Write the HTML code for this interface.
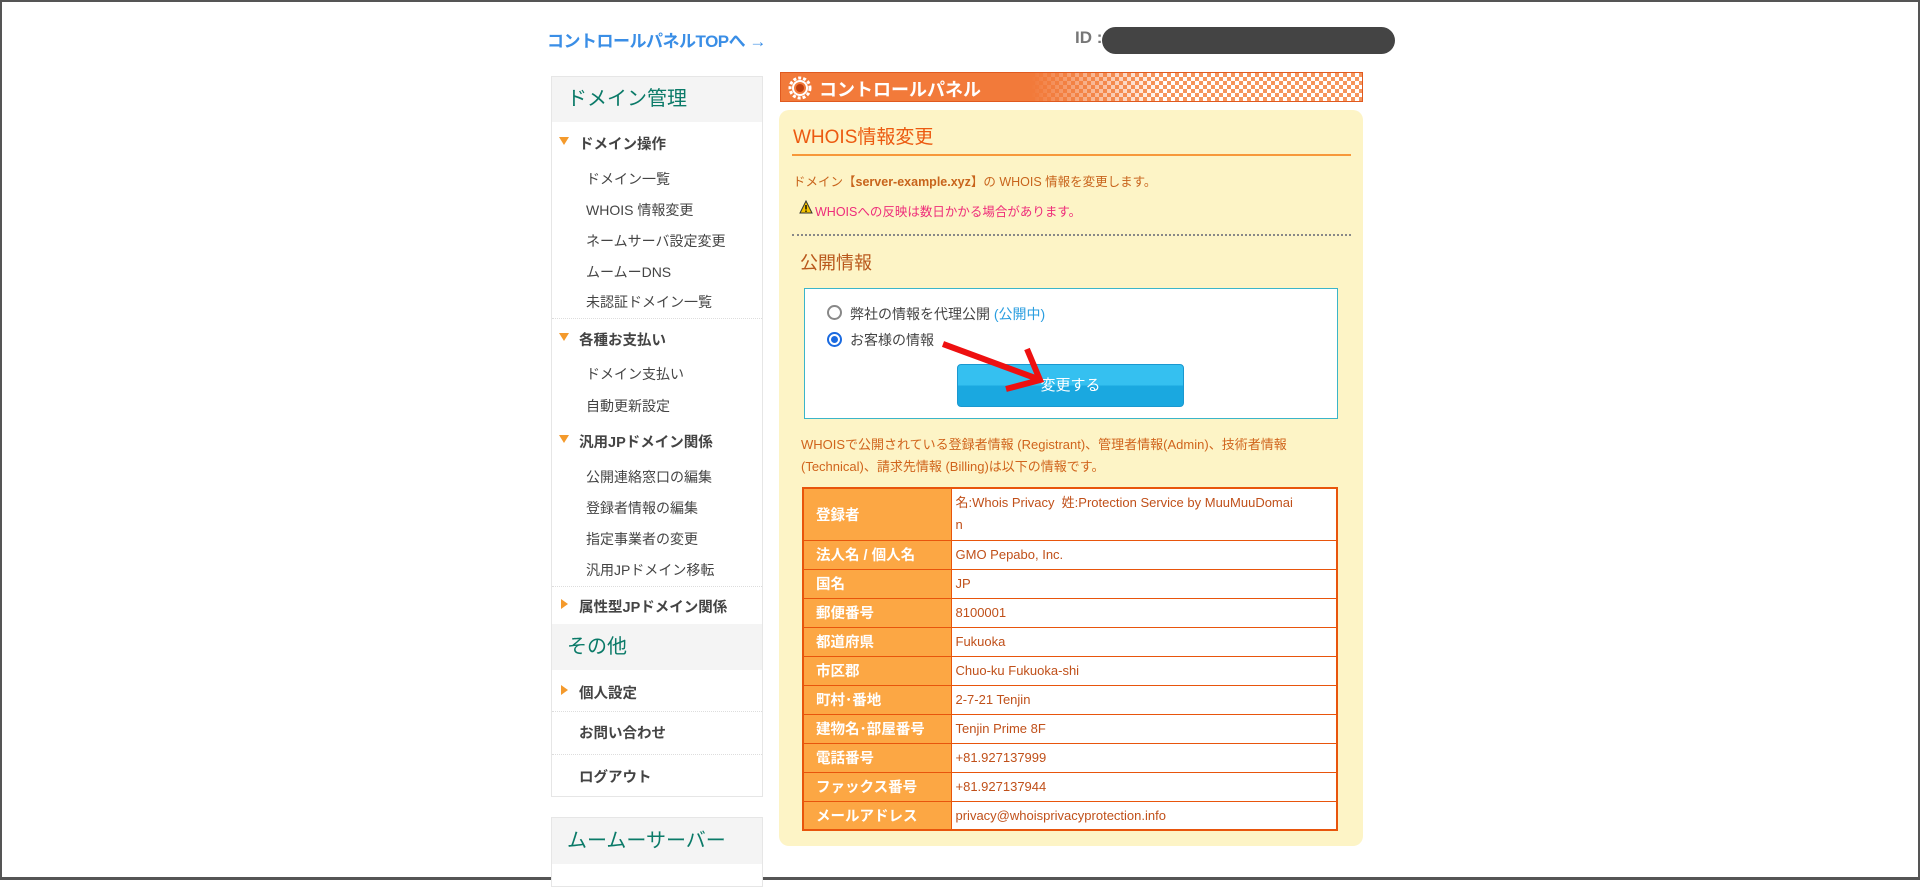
<!DOCTYPE html>
<html><head><meta charset="utf-8">
<style>
*{margin:0;padding:0;box-sizing:border-box}
body{width:1920px;height:880px;background:#fff;font-family:"Liberation Sans","Noto Sans CJK JP",sans-serif;position:relative;overflow:hidden}
.frame{position:absolute;left:0;top:0;width:1920px;height:880px;border:2px solid #555;border-bottom-width:3px}
.abs{position:absolute;white-space:nowrap}
.top{left:547px;top:27px;font-size:17px;font-weight:bold;color:#3a8ee6;letter-spacing:-0.5px}
.id{left:1075px;top:28px;font-size:17px;font-weight:bold;color:#777}
.pill{left:1102px;top:27px;width:293px;height:27px;background:#444;border-radius:14px}
.side{position:absolute;left:551px;top:76px;width:212px;height:721px;border:1px solid #e6e6e6;background:#fff}
.side2{position:absolute;left:551px;top:817px;width:212px;height:70px;border:1px solid #e6e6e6;background:#fff}
.sh{position:absolute;left:0;width:210px;background:#f4f4f4;color:#0a7a68;font-size:20px;padding-left:15px}
.it{position:absolute;left:34px;font-size:14px;color:#444}
.b{position:absolute;left:27px;font-size:14.5px;font-weight:bold;color:#444}
.tri{position:absolute;left:7px;width:0;height:0;border-left:5px solid transparent;border-right:5px solid transparent;border-top:8px solid #f49a2c}
.trr{position:absolute;left:9px;width:0;height:0;border-top:5px solid transparent;border-bottom:5px solid transparent;border-left:7px solid #f49a2c}
.dv{position:absolute;left:0;width:210px;border-top:1px dotted #ddd}
.banner{left:780px;top:72px;width:583px;height:30px;background:#f27a3a;border:1px solid #e05a20;overflow:hidden}
.chk{position:absolute;left:250px;top:0;width:333px;height:30px;background:repeating-conic-gradient(#fff 0 25%,#f6955c 0 50%) 0 0/8px 8px;-webkit-mask-image:linear-gradient(90deg,transparent,#000 40%);mask-image:linear-gradient(90deg,transparent,#000 40%)}
.panel{left:779px;top:110px;width:584px;height:736px;background:#fdf4c6;border-radius:10px}
.t1{left:793px;top:122px;font-size:19px;color:#ec5a10}
.hl{left:792px;top:154px;width:559px;height:2px;background:#f7983a}
.t2{left:793px;top:171px;font-size:12.5px;color:#c8641c}
.t3{left:801px;top:201px;font-size:12.5px;color:#ee2c7a}
.dot{left:792px;top:234px;width:559px;border-top:2px dotted #888}
.t4{left:800px;top:249px;font-size:18px;color:#b9581c}
.box{left:804px;top:288px;width:534px;height:131px;background:#fff;border:1px solid #3bb5c9}
.r{position:absolute;width:15px;height:15px;border-radius:50%;border:2px solid #888;background:#fff}
.rl{font-size:14px;color:#444}
.btn{left:957px;top:364px;width:227px;height:43px;border-radius:4px;background:linear-gradient(#35c0f0 0,#35c0f0 48%,#1aa8e0 52%,#1aa8e0 100%);border:1px solid #1a98d0;color:#fff;font-size:15px;text-align:center;line-height:42px}
.d1{left:801px;top:434px;font-size:13px;color:#d0641c;line-height:22px}
table{position:absolute;left:802px;top:487px;width:536px;border-collapse:collapse;border:2px solid #e8550c}
td{border:1px solid #e8550c;height:29px;font-size:13px;padding-left:4px;color:#c0501a;background:#fff}
td.l{background:#fca744;color:#fff;font-weight:bold;font-size:14.5px;width:148px;padding-left:12px}
</style></head><body>
<div class="frame"></div>
<div class="abs top">コントロールパネルTOPへ →</div>
<div class="abs id">ID :</div>
<div class="abs pill"></div>

<div class="side">
 <div class="sh" style="top:0;height:45px;line-height:45px">ドメイン管理</div>
 <div class="tri" style="top:60px"></div><div class="b" style="top:56px">ドメイン操作</div>
 <div class="it" style="top:92px">ドメイン一覧</div>
 <div class="it" style="top:123px">WHOIS 情報変更</div>
 <div class="it" style="top:154px">ネームサーバ設定変更</div>
 <div class="it" style="top:185px">ムームーDNS</div>
 <div class="it" style="top:215px">未認証ドメイン一覧</div>
 <div class="dv" style="top:241px"></div>
 <div class="tri" style="top:256px"></div><div class="b" style="top:252px">各種お支払い</div>
 <div class="it" style="top:287px">ドメイン支払い</div>
 <div class="it" style="top:319px">自動更新設定</div>
 <div class="tri" style="top:358px"></div><div class="b" style="top:354px">汎用JPドメイン関係</div>
 <div class="it" style="top:390px">公開連絡窓口の編集</div>
 <div class="it" style="top:421px">登録者情報の編集</div>
 <div class="it" style="top:452px">指定事業者の変更</div>
 <div class="it" style="top:483px">汎用JPドメイン移転</div>
 <div class="dv" style="top:509px"></div>
 <div class="trr" style="top:522px"></div><div class="b" style="top:519px">属性型JPドメイン関係</div>
 <div class="sh" style="top:547px;height:46px;line-height:46px">その他</div>
 <div class="trr" style="top:608px"></div><div class="b" style="top:605px">個人設定</div>
 <div class="dv" style="top:634px"></div>
 <div class="b" style="top:645px">お問い合わせ</div>
 <div class="dv" style="top:677px"></div>
 <div class="b" style="top:689px">ログアウト</div>
</div>
<div class="side2"><div class="sh" style="top:0;height:46px;line-height:46px">ムームーサーバー</div></div>

<div class="abs banner"><div class="chk"></div>
 <svg style="position:absolute;left:6px;top:2px" width="26" height="26" viewBox="0 0 26 26"><circle cx="13" cy="13" r="10" fill="none" stroke="#fff" stroke-width="3" stroke-dasharray="3 2"/><circle cx="13" cy="13" r="7" fill="#f27a3a" stroke="#fff" stroke-width="2"/><circle cx="13" cy="13" r="4" fill="#c04010"/></svg>
 <div style="position:absolute;left:38px;top:3px;color:#fff;font-weight:bold;font-size:18px;letter-spacing:0px">コントロールパネル</div>
</div>
<div class="abs panel"></div>
<div class="abs t1">WHOIS情報変更</div>
<div class="abs hl"></div>
<div class="abs t2">ドメイン【<b>server-example.xyz</b>】の WHOIS 情報を変更します。</div>
<svg class="abs" style="left:799px;top:200px" width="14" height="14" viewBox="0 0 14 14"><path d="M7 1L13 13H1Z" fill="#f5c400" stroke="#333" stroke-width="1"/><rect x="6.3" y="5" width="1.4" height="4.5" fill="#000"/><rect x="6.3" y="10.5" width="1.4" height="1.4" fill="#000"/></svg>
<div class="abs t3" style="left:815px">WHOISへの反映は数日かかる場合があります。</div>
<div class="abs dot"></div>
<div class="abs t4">公開情報</div>
<div class="abs box">
 <div class="r" style="left:22px;top:16px"></div>
 <div class="abs rl" style="left:45px;top:15px">弊社の情報を代理公開 <span style="color:#2a9ee0">(公開中)</span></div>
 <div class="r" style="left:22px;top:43px;border-color:#1a6ae0"><div style="position:absolute;left:2px;top:2px;width:7px;height:7px;border-radius:50%;background:#1a6ae0"></div></div>
 <div class="abs rl" style="left:45px;top:41px">お客様の情報</div>
</div>
<div class="abs btn">変更する</div>
<svg class="abs" style="left:930px;top:335px" width="130" height="60" viewBox="0 0 130 60"><path d="M13 9L108 44" stroke="#ee1010" stroke-width="6" fill="none"/><path d="M97 14L110 45L76 54" stroke="#ee1010" stroke-width="6" fill="none" stroke-linejoin="miter"/></svg>
<div class="abs d1">WHOISで公開されている登録者情報 (Registrant)、管理者情報(Admin)、技術者情報<br>(Technical)、請求先情報 (Billing)は以下の情報です。</div>
<table>
<tr><td class="l" style="height:52px">登録者</td><td style="line-height:22px">名:Whois Privacy&nbsp; 姓:Protection Service by MuuMuuDomai<br>n</td></tr>
<tr><td class="l">法人名 / 個人名</td><td>GMO Pepabo, Inc.</td></tr>
<tr><td class="l">国名</td><td>JP</td></tr>
<tr><td class="l">郵便番号</td><td>8100001</td></tr>
<tr><td class="l">都道府県</td><td>Fukuoka</td></tr>
<tr><td class="l">市区郡</td><td>Chuo-ku Fukuoka-shi</td></tr>
<tr><td class="l">町村･番地</td><td>2-7-21 Tenjin</td></tr>
<tr><td class="l">建物名･部屋番号</td><td>Tenjin Prime 8F</td></tr>
<tr><td class="l">電話番号</td><td>+81.927137999</td></tr>
<tr><td class="l">ファックス番号</td><td>+81.927137944</td></tr>
<tr><td class="l">メールアドレス</td><td>privacy@whoisprivacyprotection.info</td></tr>
</table>
</body></html>
